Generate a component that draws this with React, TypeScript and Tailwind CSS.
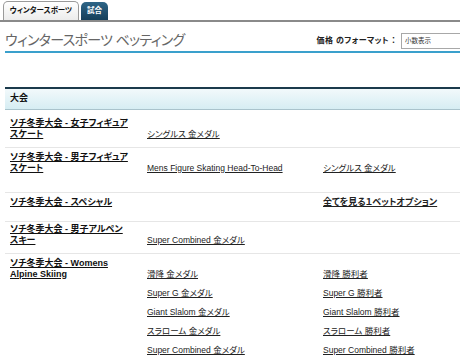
import React from "react";

const F = "[font-family:'Liberation_Sans','Noto_Sans_CJK_JP',sans-serif] [font-feature-settings:'palt']";

function L({ children, bold = false }: { children: React.ReactNode; bold?: boolean }) {
  return (
    <span className={`underline underline-offset-[1px] text-[#222] ${bold ? "font-bold text-[#111]" : ""}`}>
      {children}
    </span>
  );
}

function Name({ children }: { children: React.ReactNode }) {
  return <div className="w-[142px] pl-[5px] font-bold text-[9px] leading-[10.5px] text-[#111] underline underline-offset-[1px]">{children}</div>;
}

export default function App() {
  return (
    <div className={`w-[460px] h-[362px] bg-white overflow-hidden ${F}`}>
      {/* tabs */}
      <div className="h-[22px] pt-[3px] pl-[3px] flex items-end gap-[2px] border-b-2 border-[#8a8a8a]">
        <div className="h-[19px] w-[76px] rounded-t-[5px] border border-b-0 border-[#9a9a9a] bg-gradient-to-b from-white to-[#ececec] flex items-center justify-center text-[7.5px] font-bold text-[#111]">
          ウィンタースポーツ
        </div>
        <div className="h-[18px] w-[27px] rounded-t-[5px] bg-gradient-to-b from-[#2e6587] to-[#163f5a] flex items-center justify-center text-[7.5px] font-bold text-white">
          試合
        </div>
      </div>
      {/* title */}
      <div className="ml-[5px] mt-[9px] flex items-end justify-between border-b-2 border-[#3aa0cc] pb-[2px]">
        <div className="text-[14px] leading-[18px] text-[#666] tracking-[-0.7px]">ウィンタースポーツ ベッティング</div>
        <div className="flex items-center mr-[-4px]">
          <span className="text-[8px] font-bold text-[#222] mr-[5px] tracking-[0.4px]">価格 のフォーマット ：</span>
          <div className="w-[63px] h-[16px] border border-[#a8a8a8] bg-white text-[6.5px] text-[#333] flex items-center pl-[3px]">小数表示</div>
        </div>
      </div>
      {/* table */}
      <div className="ml-[5px] mt-[34px] border-t-2 border-[#1b3a4c]">
        <div className="h-[21px] bg-gradient-to-b from-[#f2f9fb] to-[#d6edf3] border-b border-[#a9c3cc] flex items-center pl-[5px] text-[9px] font-bold text-[#111]">
          大会
        </div>
        {/* row1 */}
        <div className="h-[38px] border-b border-[#e6e6e6] flex pt-[8px] text-[8.5px] leading-[10.5px]">
          <Name>ソチ冬季大会 - 女子フィギュア<br />スケート</Name>
          <div className="pt-[10.5px] w-[176px]"><L>シングルス 金メダル</L></div>
        </div>
        {/* row2 */}
        <div className="h-[45px] border-b border-[#e6e6e6] flex pt-[4px] text-[8.5px] leading-[10.5px]">
          <Name>ソチ冬季大会 - 男子フィギュア<br />スケート</Name>
          <div className="pt-[10.5px] w-[176px]"><L>Mens Figure Skating Head-To-Head</L></div>
          <div className="pt-[10.5px]"><L>シングルス 金メダル</L></div>
        </div>
        {/* row3 */}
        <div className="h-[29px] border-b border-[#e6e6e6] flex pt-[4px] text-[8.5px] leading-[10.5px]">
          <Name>ソチ冬季大会 - スペシャル</Name>
          <div className="w-[176px]"></div>
          <div className="text-[9px]"><L bold>全てを見る１ベットオプション</L></div>
        </div>
        {/* row4 */}
        <div className="h-[32px] border-b border-[#e6e6e6] flex pt-[2px] text-[8.5px] leading-[10.5px]">
          <Name>ソチ冬季大会 - 男子アルペン<br />スキー</Name>
          <div className="pt-[10.5px] w-[176px]"><L>Super Combined 金メダル</L></div>
        </div>
        {/* row5 */}
        <div className="flex pt-[4px] text-[8.5px] leading-[10.5px]">
          <Name>ソチ冬季大会 - Womens<br />Alpine Skiing</Name>
          <div className="pt-[10.5px] w-[176px] flex flex-col gap-[8.5px]">
            <div><L>滑降 金メダル</L></div>
            <div><L>Super G 金メダル</L></div>
            <div><L>Giant Slalom 金メダル</L></div>
            <div><L>スラローム 金メダル</L></div>
            <div><L>Super Combined 金メダル</L></div>
          </div>
          <div className="pt-[10.5px] flex flex-col gap-[8.5px]">
            <div><L>滑降 勝利者</L></div>
            <div><L>Super G 勝利者</L></div>
            <div><L>Giant Slalom 勝利者</L></div>
            <div><L>スラローム 勝利者</L></div>
            <div><L>Super Combined 勝利者</L></div>
          </div>
        </div>
      </div>
    </div>
  );
}
